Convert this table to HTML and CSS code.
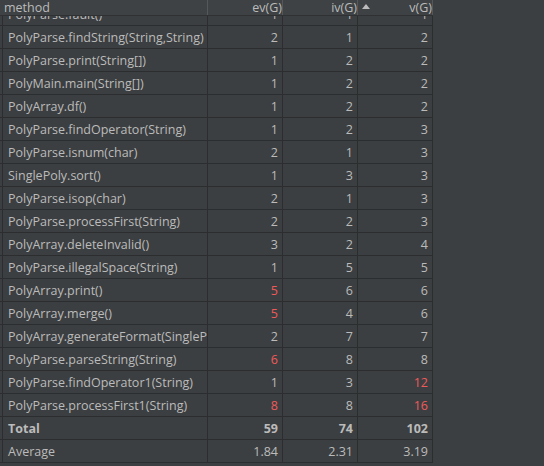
FILE: index.html
```html
<!DOCTYPE html>
<html>
<head>
<meta charset="utf-8">
<link rel="stylesheet" href="styles.css">
</head>
<body>
<div class="table">
  <div class="head">
    <div class="hc hm">method</div>
    <div class="hc">ev(G)</div>
    <div class="hc">iv(G)</div>
    <div class="hc hs"><span class="arrow"></span><span>v(G)</span></div>
  </div>
  <div class="viewport">
    <div class="rows">
      <div class="row"><div class="c m">PolyParse.fault()</div><div class="c">1</div><div class="c">1</div><div class="c">1</div></div>
      <div class="row"><div class="c m">PolyParse.findString(String,String)</div><div class="c">2</div><div class="c">1</div><div class="c">2</div></div>
      <div class="row"><div class="c m">PolyParse.print(String[])</div><div class="c">1</div><div class="c">2</div><div class="c">2</div></div>
      <div class="row"><div class="c m">PolyMain.main(String[])</div><div class="c">1</div><div class="c">2</div><div class="c">2</div></div>
      <div class="row"><div class="c m">PolyArray.df()</div><div class="c">1</div><div class="c">2</div><div class="c">2</div></div>
      <div class="row"><div class="c m">PolyParse.findOperator(String)</div><div class="c">1</div><div class="c">2</div><div class="c">3</div></div>
      <div class="row"><div class="c m">PolyParse.isnum(char)</div><div class="c">2</div><div class="c">1</div><div class="c">3</div></div>
      <div class="row"><div class="c m">SinglePoly.sort()</div><div class="c">1</div><div class="c">3</div><div class="c">3</div></div>
      <div class="row"><div class="c m">PolyParse.isop(char)</div><div class="c">2</div><div class="c">1</div><div class="c">3</div></div>
      <div class="row"><div class="c m">PolyParse.processFirst(String)</div><div class="c">2</div><div class="c">2</div><div class="c">3</div></div>
      <div class="row"><div class="c m">PolyArray.deleteInvalid()</div><div class="c">3</div><div class="c">2</div><div class="c">4</div></div>
      <div class="row"><div class="c m">PolyParse.illegalSpace(String)</div><div class="c">1</div><div class="c">5</div><div class="c">5</div></div>
      <div class="row"><div class="c m">PolyArray.print()</div><div class="c red">5</div><div class="c">6</div><div class="c">6</div></div>
      <div class="row"><div class="c m">PolyArray.merge()</div><div class="c red">5</div><div class="c">4</div><div class="c">6</div></div>
      <div class="row"><div class="c m">PolyArray.generateFormat(SinglePoly)</div><div class="c">2</div><div class="c">7</div><div class="c">7</div></div>
      <div class="row"><div class="c m">PolyParse.parseString(String)</div><div class="c red">6</div><div class="c">8</div><div class="c">8</div></div>
      <div class="row"><div class="c m">PolyParse.findOperator1(String)</div><div class="c">1</div><div class="c">3</div><div class="c red">12</div></div>
      <div class="row"><div class="c m">PolyParse.processFirst1(String)</div><div class="c red">8</div><div class="c">8</div><div class="c red">16</div></div>
      <div class="row total"><div class="c m">Total</div><div class="c">59</div><div class="c">74</div><div class="c">102</div></div>
      <div class="row"><div class="c m">Average</div><div class="c">1.84</div><div class="c">2.31</div><div class="c">3.19</div></div>
    </div>
  </div>
</div>
</body>
</html>
```
FILE: styles.css
```css
html, body {
  margin: 0;
  padding: 0;
  background: #3c3f41;
  overflow: hidden;
  height: 466px;
}
body {
  font-family: "Open Sans", "Liberation Sans", sans-serif;
  font-size: 12.5px;
  color: #bbbbbb;
}
.table {
  width: 433px;
}
.head {
  display: grid;
  grid-template-columns: 208px 75px 75px 75px;
  height: 15px;
  border-bottom: 1px solid #2f3133;
  background: #3e4244;
  position: relative;
  z-index: 1;
}
.hc {
  border-right: 1px solid #55585a;
  text-align: right;
  line-height: 15px;
  white-space: nowrap;
}
.hm {
  text-align: left;
  padding-left: 4px;
}
.hs {
  display: flex;
  justify-content: space-between;
  align-items: flex-start;
}
.arrow {
  width: 0;
  height: 0;
  margin: 4px 0 0 4px;
  border-left: 4px solid transparent;
  border-right: 4px solid transparent;
  border-bottom: 5px solid #bbbbbb;
}
.viewport {
  height: 447px;
  overflow: hidden;
}
.rows {
  margin-top: -13px;
}
.row {
  display: grid;
  grid-template-columns: 208px 75px 75px 75px;
  height: 22px;
  border-bottom: 1px solid #2b2d2e;
}
.c {
  height: 22px;
  border-right: 1px solid #2b2d2e;
  text-align: right;
  padding-right: 4px;
  line-height: 24px;
  white-space: nowrap;
  overflow: hidden;
}
.c.m {
  text-align: left;
  padding-left: 5px;
  padding-right: 0;
  border-left: 1px solid #2b2d2e;
  margin-left: 2px;
}
.red {
  color: #f05a5a;
}
.total .c {
  font-weight: bold;
}
```
